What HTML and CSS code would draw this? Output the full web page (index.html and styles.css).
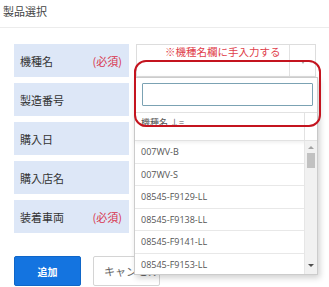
FILE: index.html
```html
<!DOCTYPE html>
<html lang="ja">
<head>
  <meta charset="UTF-8" />
  <title>製品選択</title>
  <meta name="viewport" content="width=device-width, initial-scale=1" />
  <link rel="stylesheet" href="styles.css">
</head>
<body>
  <div class="page">
    <h2 class="title">製品選択</h2>
    <form class="product-form" onsubmit="event.preventDefault();">
      <div class="rows">
        <div class="label">機種名<span class="req">(必須)</span></div>
        <div class="field select-box">
          <span class="hint">※機種名欄に手入力する</span>
          <span class="arrow"></span>
        </div>

        <div class="label">製造番号</div>
        <input class="field" type="text" />

        <div class="label">購入日</div>
        <input class="field" type="text" />

        <div class="label">購入店名</div>
        <input class="field" type="text" />

        <div class="label">装着車両<span class="req">(必須)</span></div>
        <input class="field" type="text" />
      </div>
      <div class="actions">
        <button type="submit" class="btn-add">追加</button>
        <button type="button" class="btn-cancel">キャンセル</button>
      </div>
    </form>

    <div class="dropdown">
      <div class="search"><input type="text" /></div>
      <div class="list-head">
        <span class="head-cell">機種名 ↓=</span>
        <span class="head-gap"></span>
      </div>
      <div class="list-wrap">
        <ul class="list">
          <li>007WV-B</li>
          <li>007WV-S</li>
          <li>08545-F9129-LL</li>
          <li>08545-F9138-LL</li>
          <li>08545-F9141-LL</li>
          <li>08545-F9153-LL</li>
        </ul>
        <div class="scrollbar">
          <span class="up"></span>
          <span class="thumb"></span>
          <span class="down"></span>
        </div>
      </div>
    </div>

    <div class="callout"></div>
  </div>
</body>
</html>
```

FILE: styles.css
```css
*, *::before, *::after { box-sizing: border-box; }
body {
  margin: 0;
  background: #fff;
  font-family: "Noto Sans CJK JP", "Noto Sans", sans-serif;
  color: #333;
}
.page {
  position: relative;
  width: 329px;
  height: 287px;
  overflow: hidden;
}
.title {
  margin: 0;
  height: 28px;
  padding: 4px 3px 0;
  font-size: 11px;
  font-weight: 400;
  line-height: 14px;
  color: #444;
  border-bottom: 1px solid #ececec;
}
.product-form {
  padding: 16px 14px 0;
}
.rows {
  display: grid;
  grid-template-columns: 115px 180px;
  grid-auto-rows: 33px;
  column-gap: 7px;
  row-gap: 6px;
}
.label {
  display: flex;
  align-items: center;
  justify-content: space-between;
  padding: 0 7px 0 6px;
  background: #dde7f7;
  font-size: 11px;
  color: #333;
}
.req {
  color: #d8344c;
}
.field {
  border: 1px solid #ddd;
  background: #fff;
  margin: 0;
  font-size: 11px;
}
.select-box {
  display: flex;
}
.hint {
  flex: 1;
  padding: 1px 0 0 28px;
  font-size: 10.5px;
  line-height: 12px;
  color: #e0404a;
}
.arrow {
  width: 26px;
  border-left: 1px solid #e2e2e2;
  position: relative;
}
.arrow::after {
  content: "";
  position: absolute;
  left: 11px;
  top: 16px;
  border: 2px solid transparent;
  border-top: 3px solid #aaa;
}
.actions {
  display: flex;
  gap: 12px;
  margin-top: 23px;
}
.btn-add, .btn-cancel {
  width: 67px;
  height: 30px;
  border-radius: 2px;
  font-family: inherit;
  white-space: nowrap;
  overflow: hidden;
  cursor: pointer;
}
.btn-add {
  background: #1474e0;
  border: 1px solid #0f66c8;
  color: #fff;
  font-size: 10px;
  font-weight: 700;
}
.btn-cancel {
  background: #fff;
  border: 1px solid #d4d4d4;
  color: #666;
  font-size: 11px;
  text-align: left;
  padding-left: 10px;
}
.dropdown {
  position: absolute;
  left: 134px;
  top: 77px;
  width: 184px;
  height: 198px;
  display: flex;
  flex-direction: column;
  background: #fff;
  border: 1px solid #ccc;
  box-shadow: 2px 3px 6px rgba(0, 0, 0, 0.18);
}
.search {
  padding: 5px 4px 6px 7px;
}
.search input {
  display: block;
  width: 100%;
  height: 23px;
  border: 1px solid #7ba2b3;
  border-radius: 1px;
  margin: 0;
}
.list-head {
  display: flex;
  height: 29px;
  border-top: 1px solid #e2e2e2;
  border-bottom: 1px solid #e2e2e2;
  box-shadow: 0 2px 3px rgba(0, 0, 0, 0.06);
}
.head-cell {
  flex: 1;
  padding: 4px 0 0 6px;
  font-size: 9px;
  line-height: 12px;
  color: #555;
}
.head-gap {
  width: 13px;
  border-left: 1px solid #e2e2e2;
}
.list-wrap {
  flex: 1;
  display: flex;
  min-height: 0;
}
.list {
  flex: 1;
  margin: 0;
  padding: 0;
  list-style: none;
  overflow: hidden;
}
.list li {
  height: 22.5px;
  padding-left: 6px;
  border-bottom: 1px solid #e8e8e8;
  font-family: "Open Sans", sans-serif;
  font-size: 9px;
  line-height: 22px;
  color: #555;
}
.scrollbar {
  position: relative;
  width: 13px;
  background: #f1f1f1;
  border-left: 1px solid #e6e6e6;
}
.up, .down {
  position: absolute;
  left: 3px;
  border: 3px solid transparent;
}
.up {
  top: 2px;
  border-bottom: 3px solid #a3a3a3;
}
.down {
  bottom: 4px;
  border-top: 3px solid #505050;
}
.thumb {
  position: absolute;
  left: 2px;
  top: 12px;
  width: 8px;
  height: 15px;
  background: #c1c1c1;
}
.callout {
  position: absolute;
  left: 134px;
  top: 60px;
  width: 187px;
  height: 67px;
  border: 2px solid #c4141f;
  border-radius: 12px;
  pointer-events: none;
}
```
